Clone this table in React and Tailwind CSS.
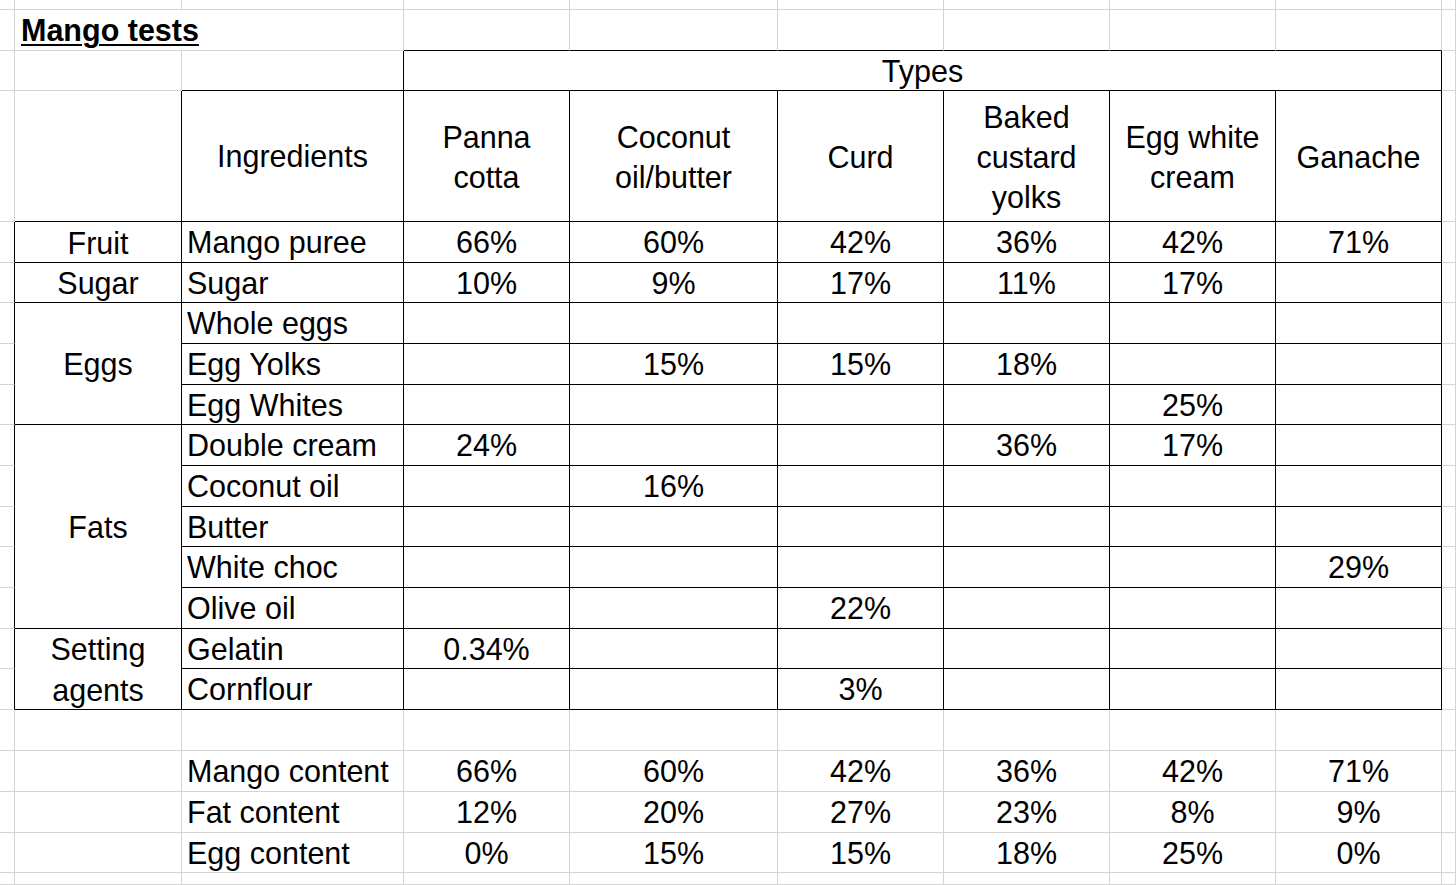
import React from 'react';

const GRAY = 'gray';
const BLACK = 'black';

// right / bottom border classes, written out so tailwind picks them up
const rightCls = { gray: 'border-r-[#d3d3d3]', black: 'border-r-black' };
const bottomCls = { gray: 'border-b-[#d3d3d3]', black: 'border-b-black' };

const Cell = ({ r = GRAY, b = GRAY, align = 'center', className = '', children }) => (
  <div
    className={`flex items-center overflow-visible whitespace-nowrap border-r border-b pt-[2px] ${rightCls[r]} ${bottomCls[b]} ${
      align === 'left' ? 'justify-start pl-[5px]' : 'justify-center text-center'
    } ${className}`}
  >
    {children}
  </div>
);

const types = ['Panna cotta', 'Coconut oil/butter', 'Curd', 'Baked custard yolks', 'Egg white cream', 'Ganache'];

const headerLabels = [
  ['Panna', 'cotta'],
  ['Coconut', 'oil/butter'],
  ['Curd'],
  ['Baked', 'custard', 'yolks'],
  ['Egg white', 'cream'],
  ['Ganache'],
];

// group label + rows of [ingredient, values...]
const groups = [
  { label: ['Fruit'], span: 'row-span-1', rows: [['Mango puree', '66%', '60%', '42%', '36%', '42%', '71%']] },
  { label: ['Sugar'], span: 'row-span-1', rows: [['Sugar', '10%', '9%', '17%', '11%', '17%', '']] },
  {
    label: ['Eggs'],
    span: 'row-span-3',
    rows: [
      ['Whole eggs', '', '', '', '', '', ''],
      ['Egg Yolks', '', '15%', '15%', '18%', '', ''],
      ['Egg Whites', '', '', '', '', '25%', ''],
    ],
  },
  {
    label: ['Fats'],
    span: 'row-span-5',
    rows: [
      ['Double cream', '24%', '', '', '36%', '17%', ''],
      ['Coconut oil', '', '16%', '', '', '', ''],
      ['Butter', '', '', '', '', '', ''],
      ['White choc', '', '', '', '', '', '29%'],
      ['Olive oil', '', '', '22%', '', '', ''],
    ],
  },
  {
    label: ['Setting', 'agents'],
    span: 'row-span-2',
    rows: [
      ['Gelatin', '0.34%', '', '', '', '', ''],
      ['Cornflour', '', '', '3%', '', '', ''],
    ],
  },
];

const summary = [
  ['Mango content', '66%', '60%', '42%', '36%', '42%', '71%'],
  ['Fat content', '12%', '20%', '27%', '23%', '8%', '9%'],
  ['Egg content', '0%', '15%', '15%', '18%', '25%', '0%'],
];

const blankRow = (key) => (
  <React.Fragment key={key}>
    <Cell />
    <Cell />
    <Cell />
    {types.map((t) => (
      <Cell key={t} />
    ))}
    <Cell />
  </React.Fragment>
);

const App = () => {
  return (
    <div className="h-[885px] w-full overflow-hidden bg-white font-['Liberation_Sans',Arial,sans-serif] text-[30.5px] text-black">
      <div className="grid h-full grid-cols-[15px_167px_222px_166px_208px_166px_166px_166px_166px_1fr] grid-rows-[10px_41px_40px_131px_41px_40px_41px_41px_40px_41px_41px_40px_41px_41px_40px_41px_41px_41px_41px_40px_1fr]">
        {/* top partial row */}
        {blankRow('top')}

        {/* title row */}
        <Cell />
        <Cell align="left" className="col-span-2 pl-[6px]">
          <span className="font-bold underline decoration-2 underline-offset-[3px]">Mango tests</span>
        </Cell>
        {types.map((t) => (
          <Cell key={t} b={BLACK} />
        ))}
        <Cell />

        {/* types row */}
        <Cell />
        <Cell />
        <Cell r={BLACK} b={BLACK} />
        <Cell r={BLACK} b={BLACK} className="col-span-6">
          Types
        </Cell>
        <Cell />

        {/* header row */}
        <Cell />
        <Cell r={BLACK} b={BLACK} />
        <Cell r={BLACK} b={BLACK}>
          Ingredients
        </Cell>
        {headerLabels.map((lines, i) => (
          <Cell key={i} r={BLACK} b={BLACK} className="leading-[40px]">
            <div>
              {lines.map((l) => (
                <div key={l}>{l}</div>
              ))}
            </div>
          </Cell>
        ))}
        <Cell />

        {/* body rows */}
        {groups.map((g) =>
          g.rows.map((row, ri) => (
            <React.Fragment key={row[0] + ri}>
              <Cell r={BLACK} />
              {ri === 0 && (
                <Cell r={BLACK} b={BLACK} className={`${g.span} leading-[41px]`}>
                  <div>
                    {g.label.map((l) => (
                      <div key={l}>{l}</div>
                    ))}
                  </div>
                </Cell>
              )}
              <Cell r={BLACK} b={BLACK} align="left">
                {row[0]}
              </Cell>
              {row.slice(1).map((v, vi) => (
                <Cell key={vi} r={BLACK} b={BLACK}>
                  {v}
                </Cell>
              ))}
              <Cell />
            </React.Fragment>
          ))
        )}

        {/* spacer row */}
        {blankRow('gap')}

        {/* summary rows */}
        {summary.map((row) => (
          <React.Fragment key={row[0]}>
            <Cell />
            <Cell />
            <Cell align="left">{row[0]}</Cell>
            {row.slice(1).map((v, vi) => (
              <Cell key={vi}>{v}</Cell>
            ))}
            <Cell />
          </React.Fragment>
        ))}

        {/* bottom partial row */}
        {blankRow('bottom')}
      </div>
    </div>
  );
};

export default App;
